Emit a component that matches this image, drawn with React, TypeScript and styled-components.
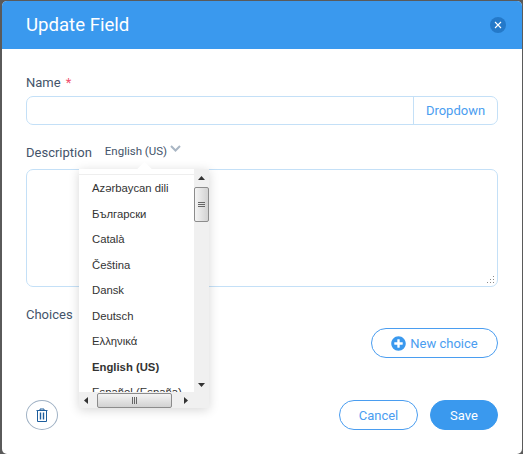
import styled, { createGlobalStyle } from "styled-components";
import { FaPlusCircle } from "react-icons/fa";

const LANGUAGES = [
  "Azərbaycan dili",
  "Български",
  "Català",
  "Čeština",
  "Dansk",
  "Deutsch",
  "Ελληνικά",
  "English (US)",
  "Español (España)",
];

const GlobalStyle = createGlobalStyle`
  html, body {
    margin: 0;
    height: 100%;
    background: #5a5a5a;
    font-family: Roboto, "Liberation Sans", sans-serif;
    color: #44546a;
  }
  * { box-sizing: border-box; }
`;

const Page = styled.div`
  width: 523px;
  height: 454px;
  padding: 1px 1px 0 2px;
  overflow: hidden;
`;

const Modal = styled.div`
  height: 453px;
  background: #fff;
  border-radius: 5px;
  overflow: hidden;
  display: flex;
  flex-direction: column;
`;

const Header = styled.header`
  height: 48px;
  flex-shrink: 0;
  background: #3a99ee;
  display: flex;
  align-items: center;
  justify-content: space-between;
  padding: 0 16px 0 24px;
`;

const Title = styled.h1`
  margin: 0;
  font-size: 18.6px;
  font-weight: 400;
  color: #fff;
`;

const CloseButton = styled.button`
  width: 16px;
  height: 16px;
  padding: 0;
  border: 0;
  border-radius: 50%;
  background: #2479c9;
  display: flex;
  align-items: center;
  justify-content: center;
`;

const Body = styled.div`
  position: relative;
  flex: 1;
  padding: 26px 24px 0;
  display: flex;
  flex-direction: column;
`;

const FieldLabel = styled.label`
  display: block;
  font-size: 13px;
  line-height: 16px;
`;

const Required = styled.span`
  color: #f0506e;
  margin-left: 5px;
`;

const InputGroup = styled.div`
  margin-top: 5px;
  height: 29px;
  display: flex;
  border: 1px solid #c4e0f7;
  border-radius: 7px;
`;

const TextInput = styled.input`
  flex: 1;
  min-width: 0;
  border: 0;
  background: transparent;
  outline: none;
`;

const Addon = styled.button`
  width: 84px;
  border: 0;
  border-left: 1px solid #c4e0f7;
  background: transparent;
  padding: 0;
  font: 400 13px Roboto, sans-serif;
  color: #4a9df0;
`;

const DescriptionRow = styled.div`
  margin-top: 17px;
  height: 28px;
  display: flex;
  gap: 13px;
`;

const DescriptionLabel = styled(FieldLabel)`
  margin-top: 3px;
`;

const LanguageToggle = styled.div`
  font-size: 11.5px;
  line-height: 14px;
  display: flex;
  gap: 3px;
  align-items: flex-start;
  margin-top: 2px;
`;

const Chevron = styled.svg`
  margin-top: 1px;
`;

const TextArea = styled.div`
  position: relative;
  height: 118px;
  border: 1px solid #c4e0f7;
  border-radius: 7px;
  margin-top: -1px;
`;

const Grip = styled.svg`
  position: absolute;
  right: 2px;
  bottom: 2px;
`;

const ChoicesLabel = styled(FieldLabel)`
  margin-top: 20px;
`;

const ChoiceActions = styled.div`
  display: flex;
  justify-content: flex-end;
  margin-top: 5px;
`;

const OutlineButton = styled.button`
  height: 30px;
  padding: 0;
  border: 1px solid #4a9df0;
  border-radius: 15px;
  background: #fff;
  color: #4a9df0;
  font: 400 13px Roboto, sans-serif;
  display: flex;
  align-items: center;
  justify-content: center;
  gap: 4px;
`;

const NewChoice = styled(OutlineButton)`
  width: 127px;
`;

const CancelButton = styled(OutlineButton)`
  width: 79px;
`;

const SaveButton = styled(OutlineButton)`
  width: 68px;
  background: #3a99ee;
  border-color: #3a99ee;
  color: #fff;
`;

const Footer = styled.div`
  margin-top: 42px;
  display: flex;
  align-items: center;
  justify-content: space-between;
`;

const FooterActions = styled.div`
  display: flex;
  gap: 12px;
`;

const TrashButton = styled.button`
  width: 32px;
  height: 30px;
  padding: 0;
  border: 1px solid #9fb1c4;
  border-radius: 50%;
  background: #fff;
  display: flex;
  align-items: center;
  justify-content: center;
`;

const Popup = styled.div`
  position: absolute;
  left: 77px;
  top: 120px;
  width: 130px;
  height: 239px;
  background: #fff;
  box-shadow: 0 2px 10px rgba(0, 0, 0, 0.16);
  display: grid;
  grid-template-columns: 115px 15px;
  grid-template-rows: 223px 16px;
  &::before {
    content: "";
    position: absolute;
    left: 60px;
    top: -5px;
    width: 11px;
    height: 11px;
    background: #fff;
    transform: rotate(45deg);
  }
`;

const ListPane = styled.div`
  position: relative;
  padding-top: 5px;
  overflow: hidden;
`;

const List = styled.ul`
  margin: 0;
  padding: 1px 0 0 13px;
  list-style: none;
  border-top: 1px solid #eee;
`;

const Item = styled.li<{ $active?: boolean }>`
  height: 25.5px;
  line-height: 25.5px;
  font-family: "Liberation Sans", Arial, sans-serif;
  font-size: 11.3px;
  font-weight: ${(p) => (p.$active ? 700 : 400)};
  color: #333;
  white-space: nowrap;
`;

const VTrack = styled.div`
  background: #f0f0f0;
  display: flex;
  flex-direction: column;
  align-items: center;
  padding-top: 7px;
`;

const HTrack = styled.div`
  background: #f0f0f0;
  display: flex;
  align-items: center;
  padding: 1px 0 0 5px;
`;

const Corner = styled.div`
  background: #f0f0f0;
`;

const Thumb = styled.div<{ $horizontal?: boolean }>`
  border: 1px solid #8c8c8c;
  border-radius: 2px;
  background: linear-gradient(${(p) => (p.$horizontal ? "180deg" : "90deg")}, #f4f4f4, #d2d2d2);
  display: flex;
  align-items: center;
  justify-content: center;
  width: ${(p) => (p.$horizontal ? "75px" : "15px")};
  height: ${(p) => (p.$horizontal ? "15px" : "35px")};
`;

const Arrow = styled.svg`
  flex-shrink: 0;
`;

const VThumbWrap = styled.div`
  margin-top: 7px;
`;

const VArrowDown = styled(Arrow)`
  margin-top: auto;
  margin-bottom: 5px;
`;

const HThumbWrap = styled.div`
  margin: 0 12px 0 9px;
`;

const Grips = ({ horizontal }: { horizontal?: boolean }) => (
  <svg width="7" height="7" viewBox="0 0 7 7">
    {[1, 3, 5].map((v) =>
      horizontal ? (
        <rect key={v} x={v} y="0" width="1" height="7" fill="#666" />
      ) : (
        <rect key={v} x="0" y={v} width="7" height="1" fill="#666" />
      )
    )}
  </svg>
);

export default function App() {
  return (
    <Page>
      <GlobalStyle />
      <Modal>
        <Header>
          <Title>Update Field</Title>
          <CloseButton aria-label="Close">
            <svg width="8" height="8" viewBox="0 0 8 8">
              <path d="M1 1l6 6M7 1L1 7" stroke="#fff" strokeWidth="1.1" />
            </svg>
          </CloseButton>
        </Header>
        <Body>
          <FieldLabel>
            Name<Required>*</Required>
          </FieldLabel>
          <InputGroup>
            <TextInput />
            <Addon>Dropdown</Addon>
          </InputGroup>
          <DescriptionRow>
            <DescriptionLabel>Description</DescriptionLabel>
            <LanguageToggle>
              English (US)
              <Chevron width="11" height="7" viewBox="0 0 11 7">
                <path d="M1 1l4.5 4.5L10 1" fill="none" stroke="#a9b6c4" strokeWidth="2" />
              </Chevron>
            </LanguageToggle>
          </DescriptionRow>
          <TextArea>
            <Grip width="9" height="9" viewBox="0 0 9 9">
              {[[7, 1], [4, 4], [7, 4], [1, 7], [4, 7], [7, 7]].map(([x, y]) => (
                <rect key={`${x}-${y}`} x={x} y={y} width="1" height="1" fill="#8a8a8a" />
              ))}
            </Grip>
          </TextArea>
          <ChoicesLabel>Choices</ChoicesLabel>
          <ChoiceActions>
            <NewChoice>
              <FaPlusCircle size={15} color="#3a99ee" />
              New choice
            </NewChoice>
          </ChoiceActions>
          <Footer>
            <TrashButton aria-label="Delete">
              <svg width="12" height="14" viewBox="0 0 12 14">
                <path d="M0.5 2.5h11M4 2.5V1h4v1.5" fill="none" stroke="#1c5d9c" />
                <path d="M1.5 2.5h9V13.5h-9z" fill="#fff" stroke="#1c5d9c" />
                <path d="M4.5 4.5v7M7.5 4.5v7" stroke="#1c5d9c" strokeWidth="1.4" />
              </svg>
            </TrashButton>
            <FooterActions>
              <CancelButton>Cancel</CancelButton>
              <SaveButton>Save</SaveButton>
            </FooterActions>
          </Footer>
          <Popup>
            <ListPane>
              <List>
                {LANGUAGES.map((lang) => (
                  <Item key={lang} $active={lang === "English (US)"}>
                    {lang}
                  </Item>
                ))}
              </List>
            </ListPane>
            <VTrack>
              <Arrow width="7" height="4" viewBox="0 0 7 4">
                <path d="M3.5 0L7 4H0z" fill="#333" />
              </Arrow>
              <VThumbWrap>
                <Thumb>
                  <Grips />
                </Thumb>
              </VThumbWrap>
              <VArrowDown width="7" height="4" viewBox="0 0 7 4">
                <path d="M0 0h7L3.5 4z" fill="#333" />
              </VArrowDown>
            </VTrack>
            <HTrack>
              <Arrow width="4" height="7" viewBox="0 0 4 7">
                <path d="M4 0v7L0 3.5z" fill="#333" />
              </Arrow>
              <HThumbWrap>
                <Thumb $horizontal>
                  <Grips horizontal />
                </Thumb>
              </HThumbWrap>
              <Arrow width="4" height="7" viewBox="0 0 4 7">
                <path d="M0 0v7l4-3.5z" fill="#333" />
              </Arrow>
            </HTrack>
            <Corner />
          </Popup>
        </Body>
      </Modal>
    </Page>
  );
}
